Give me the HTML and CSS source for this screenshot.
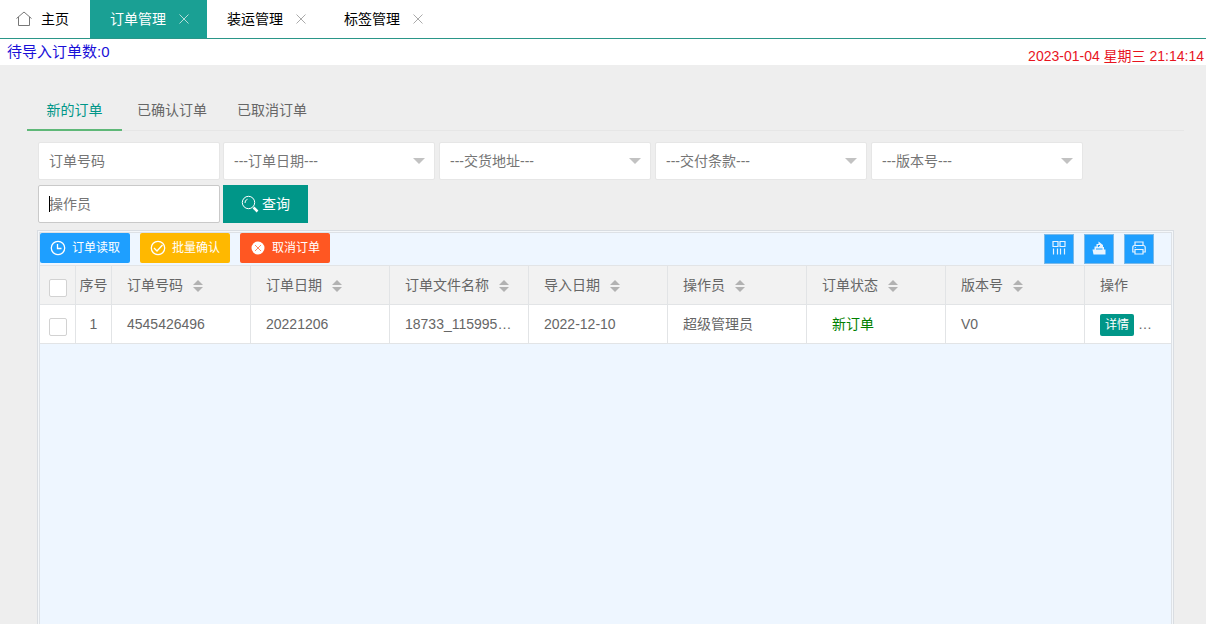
FILE: index.html
```html
<!DOCTYPE html>
<html lang="zh-CN">
<head>
<meta charset="utf-8">
<title>订单管理</title>
<link rel="stylesheet" href="styles.css">
</head>
<body>
<nav class="page-tabs">
  <a class="page-tab home" href="#"><svg class="home-icon" viewBox="0 0 16 16"><path d="M.5 7.500 8 1l7.500 6.500M2.500 6v8.500h11V6"/></svg>主页</a>
  <div class="page-tab active"><a href="#">订单管理</a><button class="close" aria-label="关闭订单管理"><svg viewBox="0 0 10 10"><path d="M.5.5l9 9M9.500.5l-9 9"/></svg></button></div>
  <div class="page-tab"><a href="#">装运管理</a><button class="close" aria-label="关闭装运管理"><svg viewBox="0 0 10 10"><path d="M.5.5l9 9M9.500.5l-9 9"/></svg></button></div>
  <div class="page-tab"><a href="#">标签管理</a><button class="close" aria-label="关闭标签管理"><svg viewBox="0 0 10 10"><path d="M.5.5l9 9M9.500.5l-9 9"/></svg></button></div>
</nav>
<div class="status-bar">
  <span class="pending">待导入订单数:0</span>
  <time class="clock">2023-01-04 星期三 21:14:14</time>
</div>
<main class="content">
  <nav class="sub-tabs">
    <a class="sub-tab current" href="#">新的订单</a>
    <a class="sub-tab" href="#">已确认订单</a>
    <a class="sub-tab" href="#">已取消订单</a>
  </nav>
  <form class="filters">
    <input class="field" type="text" placeholder="订单号码" aria-label="订单号码">
    <span class="picker"><select class="field" aria-label="订单日期"><option>---订单日期---</option></select></span>
    <span class="picker"><select class="field" aria-label="交货地址"><option>---交货地址---</option></select></span>
    <span class="picker"><select class="field" aria-label="交付条款"><option>---交付条款---</option></select></span>
    <span class="picker"><select class="field" aria-label="版本号"><option>---版本号---</option></select></span>
    <span class="editing"><input class="field" type="text" placeholder="操作员" aria-label="操作员"></span>
    <button class="search" type="button"><svg viewBox="0 0 18 18"><circle cx="7.500" cy="7.500" r="6.200"/><path d="M4 8A3.500 3.500 0 0 1 6.500 4.300"/><path class="handle" d="M12.500 12.500l4 4"/></svg>查询</button>
  </form>
  <section class="table-frame">
    <div class="table-box">
      <div class="toolbar">
        <button class="action blue"><svg viewBox="0 0 16 16"><circle cx="8" cy="8" r="6.700"/><path d="M7.500 4v4.500H11.500"/></svg>订单读取</button>
        <button class="action amber"><svg viewBox="0 0 16 16"><circle cx="8" cy="8" r="6.700"/><path d="M4 8l3 3 5.500-6"/></svg>批量确认</button>
        <button class="action red"><svg viewBox="0 0 16 16"><circle class="solid" cx="8" cy="8" r="6.500"/><path class="cross" d="M5 5l6 6M11 5l-6 6"/></svg>取消订单</button>
        <div class="tools">
          <button class="tool" aria-label="筛选列"><svg viewBox="0 0 16 16"><path d="M2 1.500h5v5H2zM9 1.500h5v5H9zM2.500 8.500v6M6.500 8.500v6M9.500 8.500v6M13.500 8.500v6"/></svg></button>
          <button class="tool" aria-label="导出"><svg viewBox="0 0 16 16"><path class="fill" d="M1.500 9.500h2V6.500h2V4h2V1.500L12 5v2h1v2.500h1.500v5h-12z"/><path class="hole" d="M5 9h6.500M7.500 7V5.500H9"/></svg></button>
          <button class="tool" aria-label="打印"><svg viewBox="0 0 16 16"><path d="M4 5V2h8v3M4 12H1.800V7.500Q1.800 5.500 3.800 5.500h8.400q2 0 2 2V12H12M4 9.500h8V14H4zM3.800 7.500h1"/></svg></button>
        </div>
      </div>
      <table class="orders">
        <colgroup><col class="narrow"><col class="narrow"><col class="wide"><col class="wide"><col class="wide"><col class="wide"><col class="wide"><col class="wide"><col class="wide"><col></colgroup>
        <thead>
          <tr>
            <th class="center"><input type="checkbox" class="tick" aria-label="全选"></th>
            <th class="center">序号</th>
            <th>订单号码<span class="sort"></span></th>
            <th>订单日期<span class="sort"></span></th>
            <th>订单文件名称<span class="sort"></span></th>
            <th>导入日期<span class="sort"></span></th>
            <th>操作员<span class="sort"></span></th>
            <th>订单状态<span class="sort"></span></th>
            <th>版本号<span class="sort"></span></th>
            <th>操作</th>
          </tr>
        </thead>
        <tbody>
          <tr>
            <td class="center"><input type="checkbox" class="tick" aria-label="选择订单 4545426496"></td>
            <td class="center">1</td>
            <td>4545426496</td>
            <td>20221206</td>
            <td>18733_115995…</td>
            <td>2022-12-10</td>
            <td>超级管理员</td>
            <td class="state">新订单</td>
            <td>V0</td>
            <td><a class="detail" href="#">详情</a>…</td>
          </tr>
        </tbody>
      </table>
    </div>
  </section>
</main>
</body>
</html>
```
FILE: styles.css
```css
* {
  box-sizing: border-box;
}

body {
  margin: 0;
  min-height: 100vh;
  display: flex;
  flex-direction: column;
  background: #eee;
  color: #666;
  font: 14px/24px "Liberation Sans", "Noto Sans CJK SC", sans-serif;
}

a {
  color: inherit;
  text-decoration: none;
}

button, input, select {
  margin: 0;
  font: inherit;
}

button {
  border: 0;
  padding: 0;
  cursor: pointer;
}

svg {
  fill: none;
  stroke: currentColor;
}

.page-tabs {
  display: flex;
  height: 39px;
  background: #fff;
  border-bottom: 1px solid #2a9688;
  color: #000;
}

.page-tab {
  display: flex;
  align-items: center;
  padding: 0 18px 0 20px;
}

.page-tab.home {
  gap: 9px;
  padding: 0 21px 0 16px;
}

.home-icon {
  width: 16px;
  height: 16px;
  color: #777;
}

.close {
  display: flex;
  width: 10px;
  height: 10px;
  margin-left: 13px;
  background: none;
  color: #aaa;
}

.page-tab.active {
  background: #1aa094;
  color: #fff;
}

.active .close {
  color: #b5ddd9;
}

.status-bar {
  display: flex;
  justify-content: space-between;
  height: 26px;
  padding: 0 2px 0 7px;
  background: #fff;
}

.pending {
  padding-top: 1px;
  color: #1a10d8;
  font-size: 15px;
}

.clock {
  padding-top: 5px;
  color: #e8141e;
}

.content {
  flex: 1;
  display: flex;
  flex-direction: column;
  padding: 25px 22px 0 27px;
}

.sub-tabs {
  display: flex;
  height: 41px;
  border-bottom: 1px solid #e6e6e6;
}

.sub-tab {
  min-width: 95px;
  height: 41px;
  padding: 0 15px;
  line-height: 40px;
  text-align: center;
}

.sub-tab.current {
  border-bottom: 2px solid #5fb878;
  color: #009688;
}

.filters {
  display: flex;
  flex-wrap: wrap;
  gap: 5px 3px;
  padding: 11px 80px 0 11px;
}

.field {
  display: block;
  width: 182px;
  height: 38px;
  padding: 0 10px;
  border: 1px solid #e6e6e6;
  border-radius: 2px;
  background: #fff;
  color: #757575;
  appearance: none;
  outline: 0;
}

.field::placeholder {
  color: #757575;
}

.picker, .editing {
  position: relative;
}

.picker .field {
  width: 212px;
}

.picker + .picker {
  margin-left: 1px;
}

.picker::after {
  content: "";
  position: absolute;
  right: 10px;
  top: 16px;
  border: 6px solid transparent;
  border-top-color: #c2c2c2;
  pointer-events: none;
}

.editing .field {
  border-color: #c9c9c9;
}

.editing::before {
  content: "";
  position: absolute;
  left: 11px;
  top: 11px;
  width: 1px;
  height: 16px;
  background: #000;
}

.search {
  display: flex;
  align-items: center;
  justify-content: center;
  gap: 3px;
  width: 85px;
  height: 38px;
  background: #009688;
  color: #fff;
}

.search svg {
  width: 18px;
  height: 18px;
}

.search .handle {
  stroke-width: 2.500;
}

.table-frame {
  flex: 1;
  display: flex;
  margin: 7px 10px 0;
  padding: 1px 1px 0;
  border: 1px solid #d9dde2;
  border-bottom: 0;
  background: #f4f7fa;
}

.table-box {
  flex: 1;
  border: 1px solid #dde1e6;
  border-bottom: 0;
  background: #eef6ff;
}

.toolbar {
  display: flex;
  gap: 10px;
  height: 32px;
}

.action {
  display: flex;
  align-items: center;
  gap: 6px;
  height: 30px;
  padding: 0 10px;
  border-radius: 2px;
  color: #fff;
  font-size: 12px;
}

.action svg {
  width: 16px;
  height: 16px;
  stroke-width: 1.300;
}

.blue {
  background: #1e9fff;
}

.amber {
  background: #ffb800;
}

.red {
  background: #ff5722;
}

.solid {
  fill: #fff;
  stroke: none;
}

.cross {
  stroke: #ff8a65;
  stroke-width: 1;
}

.tools {
  display: flex;
  gap: 10px;
  margin: 1px 17px 0 auto;
}

.tool {
  display: grid;
  justify-content: center;
  width: 30px;
  height: 30px;
  padding-top: 5px;
  border: 1px solid #7ab9e8;
  background: #1e9fff;
  color: #e8f4ff;
}

.tool svg {
  width: 16px;
  height: 16px;
  stroke-width: 1.200;
}

.tool .fill {
  fill: currentColor;
  stroke: none;
}

.tool .hole {
  stroke: #1e9fff;
}

.orders {
  width: 100%;
  table-layout: fixed;
  border-collapse: separate;
  border-spacing: 0;
  border-top: 1px solid #e2e4e6;
  background: #fff;
}

.narrow {
  width: 36px;
}

.wide {
  width: 139px;
}

.orders th, .orders td {
  height: 39px;
  padding: 0 0 0 15px;
  border-right: 1px solid #e2e4e6;
  border-bottom: 1px solid #e2e4e6;
  font-weight: inherit;
  text-align: left;
  white-space: nowrap;
}

.orders tr > :last-child {
  border-right: 0;
}

.orders th {
  background: #f2f2f2;
}

.orders .center {
  padding: 0;
  text-align: center;
}

.tick {
  display: block;
  width: 18px;
  height: 18px;
  margin: 5px auto 0;
  border: 1px solid #d2d2d2;
  border-radius: 2px;
  background: #fff;
  appearance: none;
}

.sort {
  display: inline-grid;
  gap: 2px;
  margin-left: 10px;
  vertical-align: middle;
}

.sort::before, .sort::after {
  content: "";
  border: 5px solid transparent;
}

.sort::before {
  border-top: 0;
  border-bottom-color: #b2b2b2;
}

.sort::after {
  border-bottom: 0;
  border-top-color: #b2b2b2;
}

.orders .state {
  padding-left: 25px;
  color: #008000;
}

.detail {
  display: inline-block;
  height: 22px;
  margin-right: 4px;
  padding: 0 5px;
  border-radius: 2px;
  background: #009688;
  color: #fff;
  font-size: 12px;
  line-height: 22px;
}
```
